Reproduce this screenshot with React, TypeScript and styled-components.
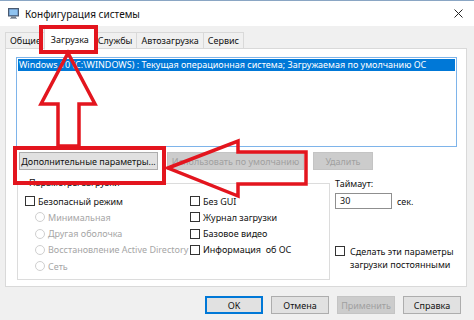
import React from 'react';
import styled, { createGlobalStyle } from 'styled-components';

const Global = createGlobalStyle`
  html, body { margin: 0; padding: 0; background: #f0f0f0; }
  body {
    width: 474px; height: 320px; overflow: hidden;
    font-family: "Noto Sans", "Liberation Sans", sans-serif;
  }
`;

const Window = styled.div`
  position: relative;
  width: 474px;
  height: 320px;
  box-sizing: border-box;
  background: #f0f0f0;
  border-top: 1px solid #8aa6c4;
  display: flex;
  flex-direction: column;
  font-size: 9px;
  color: #111;
`;

const TitleBar = styled.div`
  height: 25px;
  flex-shrink: 0;
  background: #fff;
  display: flex;
  align-items: center;
  gap: 6px;
  padding: 0 11px 0 8px;
`;

const Title = styled.span`
  flex: 1;
  font-size: 10px;
  color: #111;
`;

const TabStrip = styled.div`
  position: relative;
  z-index: 2;
  display: flex;
  align-items: flex-end;
  height: 21px;
  margin-top: 2px;
  padding-left: 5px;
`;

const Tab = styled.div<{ $active?: boolean }>`
  box-sizing: border-box;
  height: ${p => (p.$active ? 22 : 17)}px;
  margin-bottom: ${p => (p.$active ? -1 : 0)}px;
  padding: 0 ${p => (p.$active ? 6 : 4)}px;
  margin-left: ${p => (p.$active ? -2 : -1)}px;
  margin-right: ${p => (p.$active ? -2 : 0)}px;
  display: flex;
  align-items: center;
  background: ${p => (p.$active ? '#fff' : '#f0f0f0')};
  border: 1px solid #d9d9d9;
  border-bottom-color: ${p => (p.$active ? '#fff' : '#d9d9d9')};
  position: relative;
  z-index: ${p => (p.$active ? 2 : 1)};
  &:first-child { margin-left: 0; }
`;

const Panel = styled.div`
  position: relative;
  z-index: 1;
  box-sizing: border-box;
  height: 239px;
  margin: -1px 7px 0 5px;
  background: #fff;
  border: 1px solid #d9d9d9;
  padding: 8px 9px 0 10px;
  display: flex;
  flex-direction: column;
`;

const ListBox = styled.div`
  box-sizing: border-box;
  height: 90px;
  border: 1px solid #7eb4ea;
  background: #fff;
  padding: 1px;
`;

const ListRow = styled.div<{ $selected?: boolean }>`
  height: 12px;
  line-height: 12px;
  padding-left: 1px;
  white-space: nowrap;
  overflow: hidden;
  background: ${p => (p.$selected ? '#0078d7' : 'transparent')};
  color: ${p => (p.$selected ? '#fff' : '#111')};
`;

const ButtonRow = styled.div`
  display: flex;
  gap: 9px;
  margin-top: 5px;
  padding-left: 3px;
`;

const Button = styled.div<{ $w: number; $disabled?: boolean; $default?: boolean }>`
  box-sizing: border-box;
  width: ${p => p.$w}px;
  height: 18px;
  display: flex;
  align-items: center;
  justify-content: center;
  white-space: nowrap;
  background: ${p => (p.$disabled ? '#cccccc' : '#e1e1e1')};
  border: 1px solid ${p => (p.$default ? '#0078d7' : p.$disabled ? '#c4c4c4' : '#adadad')};
  box-shadow: ${p => (p.$default ? 'inset 0 0 0 1px #0078d7' : 'none')};
  color: ${p => (p.$disabled ? '#a0a0a0' : '#111')};
`;

const Lower = styled.div`
  display: grid;
  grid-template-columns: 313px 1fr;
  column-gap: 5px;
  margin-top: 7px;
  padding-left: 1px;
`;

const GroupBox = styled.fieldset`
  box-sizing: border-box;
  height: 103px;
  margin: 0;
  padding: 4px 0 0 7px;
  border: 1px solid #dcdcdc;
  min-width: 0;
`;

const Legend = styled.legend`
  padding: 0 2px;
  margin-left: 2px;
  line-height: 12px;
  color: #111;
`;

const OptionGrid = styled.div`
  display: grid;
  grid-template-columns: 165px 1fr;
  grid-template-rows: repeat(5, 16.25px);
`;

const Option = styled.div<{ $indent?: boolean; $disabled?: boolean; $col?: number; $row?: number }>`
  display: flex;
  align-items: center;
  gap: 3px;
  padding-left: ${p => (p.$indent ? 10 : 0)}px;
  color: ${p => (p.$disabled ? '#a6a6a6' : '#111')};
  white-space: nowrap;
  grid-column: ${p => p.$col ?? 1};
  grid-row: ${p => p.$row ?? 'auto'};
`;

const CheckBox = styled.span`
  box-sizing: border-box;
  width: 10px;
  height: 10px;
  flex-shrink: 0;
  border: 1px solid #333;
  background: #fff;
`;

const Radio = styled.span`
  box-sizing: border-box;
  width: 10px;
  height: 10px;
  flex-shrink: 0;
  border: 1px solid #cfcfcf;
  border-radius: 50%;
  background: #fff;
`;

const Side = styled.div`
  display: flex;
  flex-direction: column;
  padding-top: 1px;
`;

const FieldLabel = styled.div`
  line-height: 12px;
`;

const TimeoutRow = styled.div`
  display: flex;
  align-items: center;
  gap: 5px;
  margin-top: 3px;
`;

const Input = styled.div`
  box-sizing: border-box;
  width: 57px;
  height: 16px;
  border: 1px solid #8f8f8f;
  background: #fff;
  padding-left: 4px;
  line-height: 14px;
`;

const Persist = styled.div`
  display: flex;
  align-items: flex-start;
  gap: 5px;
  margin-top: 36px;
  line-height: 13px;
  & > span:first-child { margin-top: 1px; }
`;

const Footer = styled.div`
  display: flex;
  justify-content: flex-end;
  gap: 8px;
  padding: 9px 13px 0 0;
`;

const Overlay = styled.svg`
  position: absolute;
  left: 0;
  top: -1px;
  width: 474px;
  height: 320px;
  pointer-events: none;
  z-index: 5;
`;

const AppIcon = () => (
  <svg width="11" height="11" viewBox="0 0 11 11">
    <rect x="0.5" y="0.5" width="10" height="7.5" fill="#5a7fae" stroke="#4a5a70" strokeWidth="1" />
    <rect x="1.5" y="1.5" width="8" height="5.5" fill="#8fc3f0" />
    <rect x="3" y="8.5" width="5" height="1.5" fill="#6b7886" />
    <rect x="2" y="9.8" width="7" height="1" fill="#8a96a4" />
  </svg>
);

const CloseIcon = () => (
  <svg width="9" height="9" viewBox="0 0 9 9">
    <path d="M0.5 0.5 L8.5 8.5 M8.5 0.5 L0.5 8.5" stroke="#222" strokeWidth="1" />
  </svg>
);

export default function App() {
  const red = '#e3151e';
  return (
    <>
      <Global />
      <Window>
        <TitleBar>
          <AppIcon />
          <Title>Конфигурация системы</Title>
          <CloseIcon />
        </TitleBar>
        <TabStrip>
          <Tab>Общие</Tab>
          <Tab $active>Загрузка</Tab>
          <Tab>Службы</Tab>
          <Tab>Автозагрузка</Tab>
          <Tab>Сервис</Tab>
        </TabStrip>
        <Panel>
          <ListBox>
            <ListRow $selected>
              Windows 10 (C:\WINDOWS) : Текущая операционная система; Загружаемая по умолчанию ОС
            </ListRow>
          </ListBox>
          <ButtonRow>
            <Button $w={139}>Дополнительные параметры...</Button>
            <Button $w={137} $disabled>Использовать по умолчанию</Button>
            <Button $w={60} $disabled>Удалить</Button>
          </ButtonRow>
          <Lower>
            <GroupBox>
              <Legend>Параметры загрузки</Legend>
              <OptionGrid>
                <Option $row={1}><CheckBox />Безопасный режим</Option>
                <Option $row={2} $indent $disabled><Radio />Минимальная</Option>
                <Option $row={3} $indent $disabled><Radio />Другая оболочка</Option>
                <Option $row={4} $indent $disabled><Radio />Восстановление Active Directory</Option>
                <Option $row={5} $indent $disabled><Radio />Сеть</Option>
                <Option $col={2} $row={1}><CheckBox />Без GUI</Option>
                <Option $col={2} $row={2}><CheckBox />Журнал загрузки</Option>
                <Option $col={2} $row={3}><CheckBox />Базовое видео</Option>
                <Option $col={2} $row={4}><CheckBox />Информация&nbsp; об ОС</Option>
              </OptionGrid>
            </GroupBox>
            <Side>
              <FieldLabel>Таймаут:</FieldLabel>
              <TimeoutRow>
                <Input>30</Input>
                <span>сек.</span>
              </TimeoutRow>
              <Persist>
                <CheckBox />
                <span>Сделать эти параметры<br />загрузки постоянными</span>
              </Persist>
            </Side>
          </Lower>
        </Panel>
        <Footer>
          <Button $w={58} $default>OK</Button>
          <Button $w={58}>Отмена</Button>
          <Button $w={58} $disabled>Применить</Button>
          <Button $w={58}>Справка</Button>
        </Footer>
        <Overlay viewBox="0 0 474 320">
          <rect x="41" y="27" width="55" height="25" fill="none" stroke={red} strokeWidth="4" />
          <rect x="15" y="148" width="149" height="35" fill="none" stroke={red} strokeWidth="4" />
          <path
            d="M68 53 L95 104 L79 104 L79 146 L58 146 L58 104 L41 104 Z"
            fill="none" stroke={red} strokeWidth="3.5" strokeLinejoin="miter"
          />
          <path
            d="M168 168 L238 141 L238 152 L306 152 L306 184 L238 184 L238 196 Z"
            fill="none" stroke={red} strokeWidth="3.5" strokeLinejoin="miter"
          />
        </Overlay>
      </Window>
    </>
  );
}
